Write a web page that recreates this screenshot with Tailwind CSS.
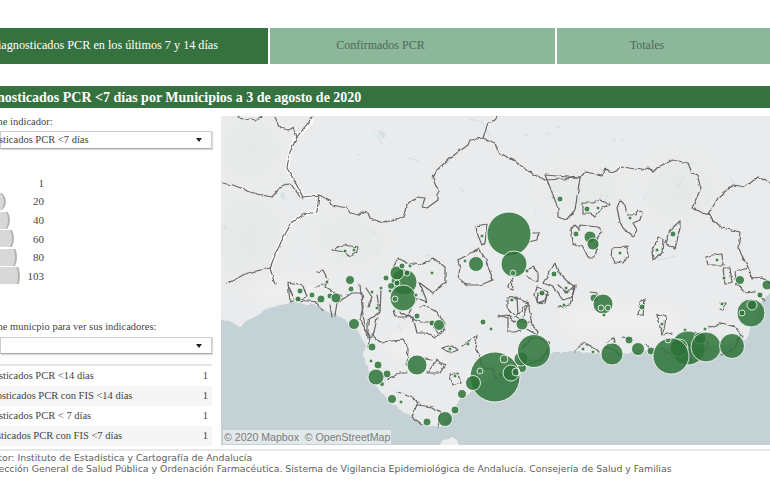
<!DOCTYPE html>
<html lang="es">
<head>
<meta charset="utf-8">
<script src="https://cdn.jsdelivr.net/npm/@tailwindcss/browser@4"></script>
<title>Diagnosticados PCR</title>
</head>
<body class="bg-white">
<div class="w-[770px] h-[480px] overflow-hidden flex flex-col font-['Liberation_Serif',serif] text-[#444]">
  <div class="flex-none h-[28px]"></div>
  <div class="flex-none h-[36px] flex gap-[2px] text-[12px]">
    <div class="w-[268px] flex-none bg-[#35723f] text-white flex items-center justify-end pr-[50px] pb-[2px] whitespace-nowrap overflow-hidden text-[12.2px]">Diagnosticados PCR en los últimos 7 y 14 días</div>
    <div class="w-[285px] flex-none bg-[#8db79b] text-[#4c6b55] flex items-center justify-center pr-[64px] pb-[2px]">Confirmados PCR</div>
    <div class="flex-1 bg-[#8db79b] text-[#4c6b55] flex items-center justify-center pr-[33px] pb-[2px]">Totales</div>
  </div>
  <div class="flex-none h-[22px] mt-[22px] bg-[#35723f] text-white font-bold text-[14px] flex items-center">
    <div class="-ml-[31px] whitespace-nowrap">Diagnosticados PCR &lt;7 días por Municipios a 3 de agosto de 2020</div>
  </div>
  <div class="flex-none h-[330px] mt-[8px] flex">
    <div class="w-[221px] flex-none flex flex-col text-[10.5px]">
      <div class="-ml-[38px] h-[16px] mt-[-2px] flex items-center whitespace-nowrap">Seleccione indicador:</div>
      <div class="h-[18px] w-[212px] mt-[1px] bg-white border border-[#ccc] border-b-[#aaa] flex items-center justify-between pr-[9px] shadow-[1px_1px_1px_#ddd]">
        <span class="-ml-[33px] whitespace-nowrap">Diagnosticados PCR &lt;7 días</span>
        <svg width="6" height="4" viewBox="0 0 6 4"><path d="M0 0h6L3 4z" fill="#222"/></svg>
      </div>
      <div class="mt-[26px] flex flex-col gap-[1.6px] w-[44px] text-[11px]">
        <div class="h-[17px] flex items-center justify-end">1</div>
        <div class="h-[17px] flex items-center justify-between"><div class="w-[30px] h-[17px] overflow-hidden flex items-center"><div class="flex-none w-[21px] h-[21px] -ml-[15.5px] rounded-full bg-[#d8d8d8] border-r-2 border-[#b4b4b4]"></div></div><span>20</span></div>
        <div class="h-[17px] flex items-center justify-between"><div class="w-[30px] h-[17px] overflow-hidden flex items-center"><div class="flex-none w-[30px] h-[30px] -ml-[20px] rounded-full bg-[#d8d8d8] border-r-2 border-[#b4b4b4]"></div></div><span>40</span></div>
        <div class="h-[17px] flex items-center justify-between"><div class="w-[30px] h-[17px] overflow-hidden flex items-center"><div class="flex-none w-[37px] h-[37px] -ml-[23.5px] rounded-full bg-[#d8d8d8] border-r-2 border-[#b4b4b4]"></div></div><span>60</span></div>
        <div class="h-[17px] flex items-center justify-between"><div class="w-[30px] h-[17px] overflow-hidden flex items-center"><div class="flex-none w-[44px] h-[44px] -ml-[27px] rounded-full bg-[#d8d8d8] border-r-2 border-[#b4b4b4]"></div></div><span>80</span></div>
        <div class="h-[17px] flex items-center justify-between"><div class="w-[30px] h-[17px] overflow-hidden flex items-center"><div class="flex-none w-[50px] h-[50px] -ml-[30px] rounded-full bg-[#d8d8d8] border-r-2 border-[#b4b4b4]"></div></div><span>103</span></div>
      </div>
      <div class="-ml-[38px] h-[16px] mt-[35px] flex items-center whitespace-nowrap">Seleccione municpio para ver sus indicadores:</div>
      <div class="h-[18px] w-[212px] mt-[2px] bg-white border border-[#ccc] border-b-[#aaa] flex items-center justify-end pr-[9px] shadow-[1px_1px_1px_#ddd]">
        <svg width="6" height="4" viewBox="0 0 6 4"><path d="M0 0h6L3 4z" fill="#222"/></svg>
      </div>
      <div class="mt-[10px] w-[212px] border-t-2 border-[#e6e6e6] flex flex-col">
        <div class="h-[20px] flex items-center justify-between pr-[4px]"><span class="-ml-[32px] whitespace-nowrap">Diagnosticados PCR &lt;14 días</span><span>1</span></div>
        <div class="h-[20px] bg-[#f5f5f5] flex items-center justify-between pr-[4px]"><span class="-ml-[29px] whitespace-nowrap">Diagnosticados PCR con FIS &lt;14 días</span><span>1</span></div>
        <div class="h-[20px] flex items-center justify-between pr-[4px]"><span class="-ml-[32px] whitespace-nowrap">Diagnosticados PCR &lt; 7 días</span><span>1</span></div>
        <div class="h-[20px] bg-[#f5f5f5] flex items-center justify-between pr-[4px]"><span class="-ml-[34px] whitespace-nowrap">Diagnosticados PCR con FIS &lt;7 días</span><span>1</span></div>
      </div>
    </div>
    <div class="relative w-[549px] h-[329px] flex-none overflow-hidden bg-[#eaebec]">
      <svg class="block" width="549" height="329" viewBox="221 116 549 329">
        <defs>
          <filter id="b"><feGaussianBlur stdDeviation="7"/></filter>
          <filter id="w" x="-5%" y="-5%" width="110%" height="110%"><feTurbulence type="fractalNoise" baseFrequency=".16" numOctaves="2" seed="4"/><feDisplacementMap in="SourceGraphic" scale="3.5" xChannelSelector="R" yChannelSelector="G"/><feGaussianBlur stdDeviation=".35"/></filter>
          <filter id="c" x="-2%" y="-2%" width="104%" height="104%"><feTurbulence type="fractalNoise" baseFrequency=".09" numOctaves="2" seed="9"/><feDisplacementMap in="SourceGraphic" scale="5" xChannelSelector="R" yChannelSelector="G"/><feGaussianBlur stdDeviation=".4"/></filter>
        </defs>
        <g fill="#e4e8e4" filter="url(#b)" opacity=".5">
          <ellipse cx="250" cy="150" rx="25" ry="25"/><ellipse cx="250" cy="240" rx="28" ry="40"/><ellipse cx="350" cy="240" rx="30" ry="20"/><ellipse cx="580" cy="190" rx="35" ry="20"/><ellipse cx="680" cy="190" rx="30" ry="30"/>
        </g>
        <g fill="#f1f1f1" filter="url(#b)" opacity=".7">
          <ellipse cx="420" cy="345" rx="30" ry="18"/><ellipse cx="620" cy="320" rx="60" ry="14"/><ellipse cx="290" cy="290" rx="40" ry="10"/>
        </g>
        <path filter="url(#c)" d="M218 317L240 325 253 317 270 307 290 303 310 303 320 308 337 315 350 322 360 335 367 348 363 355 367 365 368 378 380 390 390 402 407 415 423 425 440 428 453 412 463 398 480 385 520 360 552 352 575 352 602 353 625 353 652 348 695 347 722 345 745 340 752 325 762 302 775 285V450H218Z" fill="#c4d2d5"/>
        <path d="M440 445l3-5 6-1 3-2 5 3 2 5z" fill="#eceded"/>
        <g fill="none" stroke="#cddfe2" stroke-width="1">
          <path d="M374 133l5 5 3 6M357 154l3 1M522 134l8 2M470 119l12 3 8 14M408 158l10 3M545 133l4 1M621 140l4 1M556 126l5 2M616 139l-4 2M687 165l6-3M683 177l-4 8-4 2M731 178l3 6 5 1M646 194l-3 7M608 195l-3 5M580 197l-3 6M602 194l-3 5M658 260l10-2 8-2M534 215l3-5M468 262l3-4M460 188l5 5M420 205l4 4M377 253l2 3M403 318l3 2M398 325l3 6M424 365l2-3"/>
        </g>
        <path d="M377 130l3 6 3 3 3-3-3-5zM282 190l-2 6 3 4 3-3zM225 224l-2 4 4 1zM424 256l4-2 2 3M375 232l-3-2 2 6" fill="#d4e2e4"/>
        <g fill="none" stroke="#fff" stroke-width="4" stroke-linejoin="round" opacity=".7">
          <path d="M313 117L310 125 295 138 290 152 287 168 295 182 303 197 319 195 317 212 303 215 292 222 283 238 275 255 270 268 275 285"/>
        </g>
        <g filter="url(#w)" fill="none" stroke="#666" stroke-width="1.2" stroke-linejoin="round" stroke-linecap="round">
          <path d="M275 117L280 128 288 130 293 127 297 137 308 123 312 117"/>
          <path d="M238 117l7 3 5-1 5 1 7-3"/>
          <path d="M297 137L290 152 287 168 295 182 303 197 319 195 317 212 303 215 292 222 283 238 275 255 270 268 275 285"/>
          <path d="M221 183L233 185 253 193 272 197 280 188 290 183 301 198"/>
          <path d="M228 283L247 273 270 268"/>
          <path d="M319 195L330 200 332 205 347 208 350 213 358 215 362 212 368 213 370 218 383 223 403 217 407 205 417 197 425 198 422 207 427 208 438 200 438 190 433 178 437 170 450 158 468 145 470 140 483 138 488 123 495 120 498 116"/>
          <path d="M483 138L495 143 498 152 513 160 530 172 545 180 580 178 585 172 602 175 605 168 610 173 622 167 642 170 648 167 653 172 658 167 673 160 688 163 692 173 697 175 701 188 692 208 708 215 722 228 740 232 738 248 747 265 752 278"/>
          <path d="M708 215L718 198 733 185 745 187 758 177 770 183"/>
          <path d="M545 175L580 178 575 210 566 220 558 217 558 208 550 187Z"/>
          <path d="M583 203L593 203 600 200 610 204 602 208 595 217 590 213 583 213Z"/>
          <path d="M620 200L625 205 627 215 635 215 638 210 642 212 640 220 633 223 637 230 633 237 623 228 620 222 617 208Z"/>
          <path d="M665 243L670 230 680 221 680 228 675 249Z"/>
          <path d="M658 237L663 240 662 253 653 260 652 252Z"/>
          <path d="M612 248L627 247 628 255 623 263 615 262 611 257Z"/>
          <path d="M570 228L575 225 580 230 580 225 598 227 602 232 597 238 598 243 595 257 588 257 583 247 572 243Z"/>
          <path d="M706 257L712 255 722 254 723 265 708 265Z"/>
          <path d="M723 268L730 268 732 282 725 285Z"/>
          <path d="M735 272L748 268 753 278 762 277 770 283M735 272L737 285"/>
          <path d="M738 285L745 293 755 292M758 293l6 8"/>
          <path d="M538 293L547 295 545 303 537 302Z"/>
          <path d="M558 285L567 293 575 285 570 305 558 307"/>
          <path d="M507 298L517 297 518 315 528 302 532 325 538 332 537 335 525 328 515 332 508 332 508 318 498 315"/>
          <path d="M590 292L597 293 596 300"/>
          <path d="M640 302L645 299 643 315 638 315Z"/>
          <path d="M658 314L666 317 663 335 660 328Z"/>
          <path d="M720 303L725 303 723 310 720 309"/>
          <path d="M575 352L583 342 595 348 599 352M607 342L613 338 615 345M623 337L633 340M645 345L650 347M665 335L672 333M708 328L722 323 735 327 743 337"/>
          <path d="M522 348L532 337 550 342 545 355 535 363 523 365M605 348L610 348 618 353 620 357M722 355L735 348 740 335M695 332L708 342 703 358M688 342L692 363M662 348L678 358 692 345M498 372L505 378 510 365M480 360l4 10 8-3 4 12"/>
          <path d="M288 282L303 285 307 297 290 302Z"/>
          <path d="M317 272L323 270 328 280 325 287 335 293 342 298M315 287L323 285"/>
          <path d="M335 315L337 303 352 293 362 293 363 307 360 320 370 337 368 347"/>
          <path d="M315 302L323 310M330 305L332 317M288 285L295 300 320 302"/>
          <path d="M377 295L380 312 368 320 368 337M366 288L372 297 368 307M381 290L380 312"/>
          <path d="M393 310L395 317 413 317 417 333 428 333 435 337 443 332 445 323 437 312 423 305 420 307"/>
          <path d="M392 270L398 258 407 263 420 265 433 258 445 267 445 283 433 293 420 283 427 302 417 298 407 317"/>
          <path d="M332 250L342 245 358 247 357 252 348 257 345 252Z"/>
          <path d="M458 260L473 252 478 248 485 258 493 280 480 285 467 285 458 278 460 268Z"/>
          <path d="M476 226L487 224 485 243 482 245 477 233Z"/>
          <path d="M533 233L538 233 537 240 528 242"/>
          <path d="M523 272L533 267 538 273 538 282 527 277"/>
          <path d="M512 278L508 288 513 290Z"/>
          <path d="M543 283L555 263 558 272 568 282 575 287 572 297 563 300 553 287Z"/>
          <path d="M537 287L548 292 545 300 538 303 535 295Z"/>
          <path d="M507 300L517 298 528 303 522 320 513 315 507 308Z"/>
          <path d="M498 317L507 315 515 322 530 322"/>
          <path d="M372 335L380 342 403 340 408 348 407 365M385 380L400 373 407 373"/>
          <path d="M427 373L437 360 445 365 440 373Z"/>
          <path d="M450 375L458 373 460 382 453 385Z"/>
          <path d="M398 392L413 398 418 402 412 417 423 425M417 405L433 407 440 412 438 427"/>
          <path d="M462 347L477 335 475 348 480 357M442 348L452 345 458 350 450 353ZM425 359l7 1"/>
          <path d="M400 312L420 322 430 322 438 333M360 285L363 315 367 338 373 337 377 318"/>
        </g>
        <g fill="#2e7339" fill-opacity=".85" stroke="#fff" stroke-width=".8">
          <circle cx="509" cy="234" r="22"/><circle cx="514" cy="264" r="13"/><circle cx="513" cy="273" r="3" fill="none"/>
          <circle cx="476" cy="264" r="7.5"/><circle cx="465" cy="261" r="2"/><circle cx="482" cy="236" r="2"/><circle cx="527" cy="271" r="2"/>
          <circle cx="560" cy="199" r="3"/><circle cx="587" cy="209" r="3"/><circle cx="598" cy="208" r="2"/><circle cx="630" cy="218" r="2"/><circle cx="673" cy="234" r="3"/><circle cx="657" cy="250" r="2"/>
          <circle cx="576" cy="234" r="3"/><circle cx="590" cy="237" r="6"/><circle cx="593" cy="244" r="6"/><circle cx="620" cy="253" r="2"/><circle cx="717" cy="260" r="2"/><circle cx="724" cy="278" r="2"/><circle cx="740" cy="280" r="4.5"/><circle cx="767" cy="285" r="5"/>
          <circle cx="554" cy="274" r="3"/><circle cx="566" cy="288" r="2"/><circle cx="542" cy="293" r="3"/><circle cx="564" cy="305" r="2"/><circle cx="511" cy="300" r="2"/>
          <circle cx="345" cy="251" r="2"/><circle cx="354" cy="250" r="2"/><circle cx="350" cy="280" r="4.5"/><circle cx="351" cy="289" r="3"/><circle cx="327" cy="282" r="2"/><circle cx="300" cy="291" r="3"/><circle cx="298" cy="299" r="3"/><circle cx="312" cy="295" r="3"/><circle cx="321" cy="299" r="4"/><circle cx="330" cy="296" r="3"/><circle cx="336" cy="298" r="5"/><circle cx="354" cy="324" r="5.5"/>
          <circle cx="372" cy="292" r="2"/><circle cx="381" cy="288" r="2"/><circle cx="377" cy="308" r="2"/>
          <circle cx="404" cy="282" r="13"/><circle cx="397" cy="273" r="7"/><circle cx="402" cy="266" r="3"/><circle cx="410" cy="266" r="2"/><circle cx="407" cy="273" r="3"/><circle cx="386" cy="278" r="3"/><circle cx="397" cy="283" r="3"/><circle cx="391" cy="286" r="3.5"/><circle cx="390" cy="291" r="2"/><circle cx="403" cy="298" r="13"/><circle cx="395" cy="299" r="3" fill="none"/><circle cx="416" cy="295" r="2"/>
          <circle cx="432" cy="273" r="2"/><circle cx="417" cy="316" r="3"/><circle cx="432" cy="323" r="3"/><circle cx="439" cy="325" r="5.5"/>
          <circle cx="372" cy="347" r="4"/><circle cx="371" cy="361" r="2"/><circle cx="378" cy="365" r="4"/><circle cx="387" cy="374" r="4"/><circle cx="382" cy="384" r="2.5"/><circle cx="376" cy="377" r="8"/><circle cx="392" cy="399" r="4.5"/><circle cx="401" cy="402" r="2"/><circle cx="417" cy="365" r="10"/><circle cx="427" cy="422" r="4"/><circle cx="445" cy="419" r="7.5"/><circle cx="455" cy="410" r="4"/><circle cx="462" cy="394" r="4.5"/><circle cx="455" cy="376" r="2"/><circle cx="450" cy="349" r="2"/><circle cx="468" cy="344" r="2"/><circle cx="483" cy="322" r="3"/><circle cx="491" cy="329" r="2"/>
          <circle cx="522" cy="368" r="4.5"/><circle cx="521" cy="359" r="7"/><circle cx="534" cy="351" r="16.5"/><circle cx="495" cy="377" r="25"/><circle cx="473" cy="383" r="7.5"/><circle cx="480" cy="371" r="3" fill="none"/><circle cx="511" cy="373" r="8"/><circle cx="516" cy="372" r="4" fill="none"/><circle cx="504" cy="359" r="4" fill="none"/>
          <circle cx="522" cy="324" r="6"/><circle cx="512" cy="300" r="2"/><circle cx="594" cy="298" r="4"/><circle cx="603" cy="304" r="10"/><circle cx="601" cy="308" r="3" fill="none"/><circle cx="608" cy="308" r="3" fill="none"/><circle cx="604" cy="315" r="2"/><circle cx="642" cy="307" r="3"/><circle cx="662" cy="324" r="2"/><circle cx="685" cy="330" r="2"/><circle cx="705" cy="329" r="2"/><circle cx="722" cy="304" r="2"/>
          <circle cx="760" cy="295" r="3"/><circle cx="751" cy="313" r="14"/><circle cx="752" cy="305" r="5"/><circle cx="742" cy="313" r="3"/>
          <circle cx="583" cy="349" r="2"/><circle cx="593" cy="352" r="2"/><circle cx="612" cy="354" r="11"/><circle cx="629" cy="340" r="4"/><circle cx="638" cy="349" r="6.5"/><circle cx="651" cy="351" r="4"/>
          <circle cx="688" cy="348" r="17"/><circle cx="679" cy="348" r="9"/><circle cx="671" cy="356" r="18"/><circle cx="668" cy="340" r="3" fill="none"/><circle cx="700" cy="338" r="6"/><circle cx="706" cy="347" r="15"/><circle cx="732" cy="346" r="12.5"/>
        </g>
      </svg>
      <div class="absolute left-[2px] bottom-[1px] h-[14px] px-[1px] bg-white/50 text-[#7c7c7c] text-[10.6px] leading-[14px] whitespace-nowrap font-['Liberation_Sans',sans-serif]">© 2020 Mapbox&nbsp; © OpenStreetMap</div>
    </div>
  </div>
  <div class="flex-none h-[2px] mt-[3px] bg-[#e8e8e8]"></div>
  <div class="flex-1 pt-[1px] text-[9.35px] leading-[11px] font-['DejaVu_Sans',sans-serif] text-[#606060] whitespace-nowrap">
    <div class="-ml-[14px]">Autor: Instituto de Estadística y Cartografía de Andalucía</div>
    <div class="-ml-[15px]">Dirección General de Salud Pública y Ordenación Farmacéutica. Sistema de Vigilancia Epidemiológica de Andalucía. Consejería de Salud y Familias</div>
  </div>
</div>
</body>
</html>
